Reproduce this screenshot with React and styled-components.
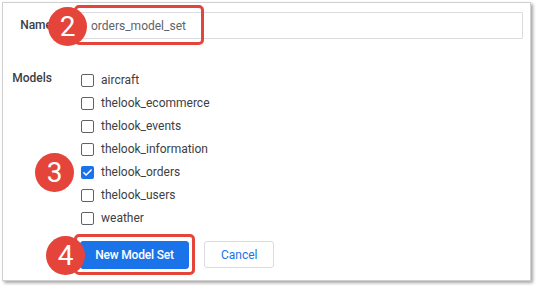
import React from "react";
import styled, { createGlobalStyle } from "styled-components";

const Global = createGlobalStyle`
  html, body { margin: 0; padding: 0; background: #ffffff; }
  body { font-family: Roboto, "Liberation Sans", Arial, sans-serif; }
  * { box-sizing: border-box; }
`;

const Page = styled.div`
  width: 536px;
  height: 286px;
  padding: 2px 0 0 2px;
  background: #ffffff;
`;

const Card = styled.div`
  position: relative;
  width: 529px;
  height: 279px;
  background: #ffffff;
  border: 1px solid #cfcfcf;
  box-shadow: 2px 2px 3px rgba(0, 0, 0, 0.35);
  padding: 9px 7px 0 9px;
`;

const FormGrid = styled.div`
  display: grid;
  grid-template-columns: 40px 1fr;
  column-gap: 23px;
  align-items: start;
`;

const Label = styled.div`
  justify-self: end;
  font-size: 12px;
  font-weight: 500;
  color: #3c4043;
  line-height: ${(p) => p.$lh || 27}px;
  margin-top: ${(p) => p.$mt || 0}px;
`;

const Input = styled.div`
  height: 27px;
  border: 1px solid #dadce0;
  border-radius: 1px;
  display: flex;
  align-items: center;
  padding-left: 15px;
  font-size: 12px;
  color: #5f6368;
`;

const ModelList = styled.div`
  display: flex;
  flex-direction: column;
  margin-top: 29px;
`;

const Row = styled.label`
  display: flex;
  align-items: center;
  height: 23px;
  gap: 7px;
  padding-left: 6px;
  font-size: 12px;
  color: #3c4043;
`;

const Box = styled.span`
  width: 13px;
  height: 13px;
  border-radius: 2px;
  border: ${(p) => (p.$checked ? "none" : "1.5px solid #5f6368")};
  background: ${(p) => (p.$checked ? "#1a73e8" : "#ffffff")};
  display: inline-flex;
  align-items: center;
  justify-content: center;
  flex: none;
  margin-top: 1px;
`;

const Buttons = styled.div`
  grid-column: 2;
  display: flex;
  gap: 15px;
  margin-top: 12px;
  padding-left: 5px;
  align-items: flex-start;
`;

const Button = styled.button`
  height: ${(p) => (p.$primary ? 28 : 27)}px;
  padding: 0 ${(p) => (p.$primary ? 14 : 16)}px;
  border-radius: 3px;
  font-family: Roboto, "Liberation Sans", Arial, sans-serif;
  font-size: 12px;
  font-weight: ${(p) => (p.$primary ? 500 : 400)};
  letter-spacing: ${(p) => (p.$primary ? "-0.2px" : "0")};
  color: ${(p) => (p.$primary ? "#ffffff" : "#1a73e8")};
  background: ${(p) => (p.$primary ? "#1a73e8" : "#ffffff")};
  border: 1px solid ${(p) => (p.$primary ? "#1a73e8" : "#dadce0")};
  width: ${(p) => p.$w}px;
  cursor: pointer;
`;

const Highlight = styled.div`
  position: absolute;
  left: ${(p) => p.$x}px;
  top: ${(p) => p.$y}px;
  width: ${(p) => p.$w}px;
  height: ${(p) => p.$h}px;
  border: 3px solid #e5443a;
  border-radius: 5px;
  pointer-events: none;
`;

const Badge = styled.div`
  position: absolute;
  left: ${(p) => p.$x}px;
  top: ${(p) => p.$y}px;
  width: 39px;
  height: 39px;
  border-radius: 50%;
  background: #e5443a;
  color: #ffffff;
  display: flex;
  align-items: center;
  justify-content: center;
  font-family: Roboto, "Liberation Sans", Arial, sans-serif;
  font-size: 28px;
  line-height: 1;
  z-index: 2;
`;

const models = [
  { name: "aircraft", checked: false },
  { name: "thelook_ecommerce", checked: false },
  { name: "thelook_events", checked: false },
  { name: "thelook_information", checked: false },
  { name: "thelook_orders", checked: true },
  { name: "thelook_users", checked: false },
  { name: "weather", checked: false },
];

const Check = () => (
  <svg width="11" height="11" viewBox="0 0 24 24">
    <path d="M4 12.5l5 5L20 6.5" fill="none" stroke="#fff" strokeWidth="3.4" strokeLinecap="round" strokeLinejoin="round" />
  </svg>
);

export default function App() {
  return (
    <>
      <Global />
      <Page>
        <Card>
          <FormGrid>
            <Label>Name</Label>
            <Input>orders_model_set</Input>
            <Label $lh={23} $mt={28}>Models</Label>
            <ModelList>
              {models.map((m) => (
                <Row key={m.name}>
                  <Box $checked={m.checked}>{m.checked && <Check />}</Box>
                  {m.name}
                </Row>
              ))}
            </ModelList>
            <Buttons>
              <Button $primary $w={109}>New Model Set</Button>
              <Button $w={70}>Cancel</Button>
            </Buttons>
          </FormGrid>
          <Highlight $x={71} $y={2} $w={130} $h={40} />
          <Highlight $x={71} $y={231} $w={121} $h={41} />
          <Badge $x={45} $y={4}>2</Badge>
          <Badge $x={32} $y={150}>3</Badge>
          <Badge $x={43} $y={233}>4</Badge>
        </Card>
      </Page>
    </>
  );
}
